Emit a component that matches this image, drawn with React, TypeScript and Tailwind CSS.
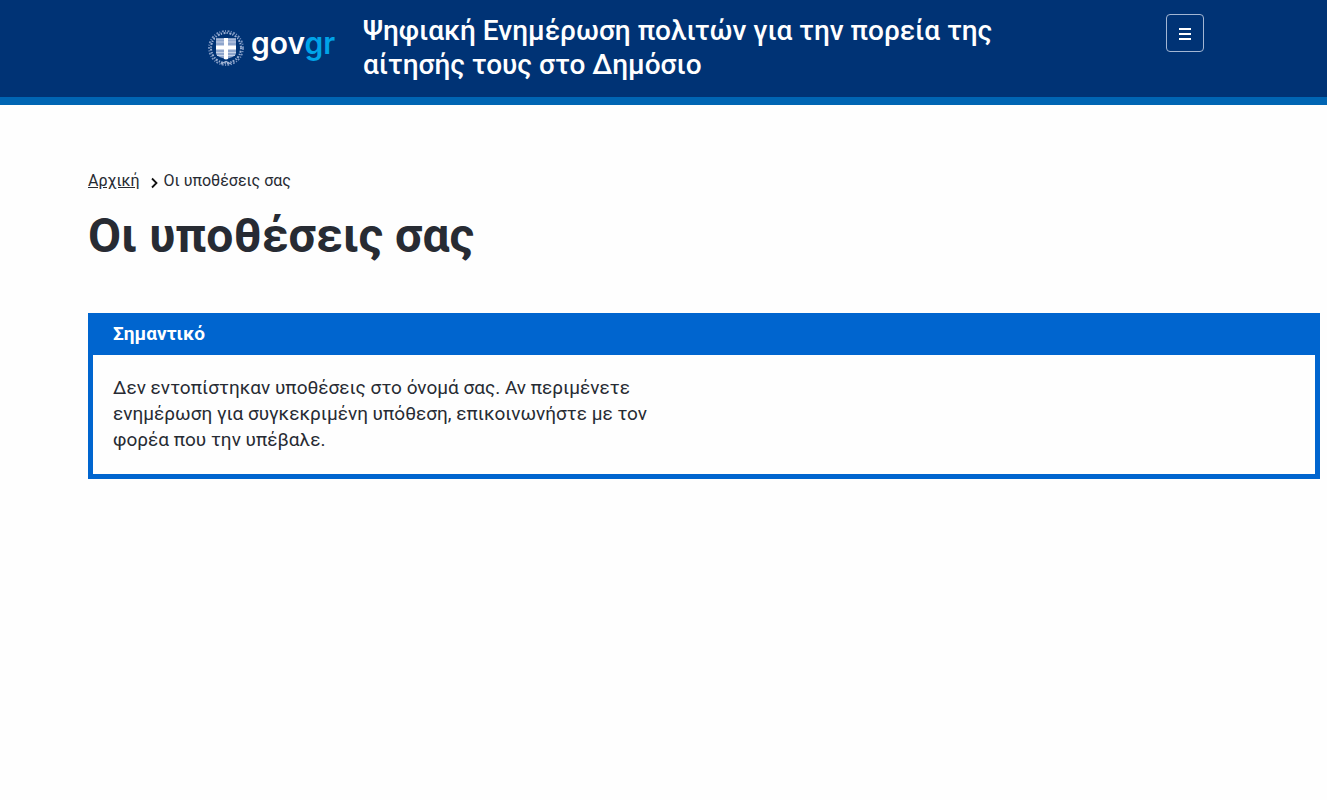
function Emblem() {
  return (
    <svg viewBox="0 0 38 38" className="size-[38px] shrink-0" aria-hidden="true">
      <circle cx="19" cy="19" r="17" fill="none" stroke="#7d97c2" strokeWidth="1.8" strokeDasharray="1.9 1.3 1 1.6" />
      <circle cx="19" cy="19" r="15" fill="none" stroke="#9aafd2" strokeWidth="2" strokeDasharray="1.3 1.5 2 1.1" />
      <path d="M14 35l5-2.500 5 2.500" fill="none" stroke="#a9bad8" strokeWidth="1.2" />
      <path d="M8 8.500h22V25c0 3-4 4.500-11 6-7-1.500-11-3-11-6z" fill="#003375" />
      <path d="M9 9.500h20V24c0 3-4 4.500-10 6-6-1.500-10-3-10-6z" fill="#8ea5cc" />
      <path d="M9 10h20M9 13h20M9 23.500h20M10 26.500h18" stroke="#c3d0e5" strokeWidth="1.2" />
      <path d="M17 9h4v7.500h8v4h-8V30l-2 .5-2-.5v-9.500H9v-4h8z" fill="#fff" />
    </svg>
  );
}

function Header() {
  return (
    <header className="border-b-8 border-[#0065b3] bg-[#003375] text-white">
      <div className="flex items-start pt-3.5 pr-[123px] pb-[15px] pl-[207px]">
        <a href="/" aria-label="govgr" className="mt-[13px] flex w-32 shrink-0 items-center gap-1.5">
          <Emblem />
          <span className="pb-2.5 font-['Inter',sans-serif] text-[30px] leading-8 font-semibold">
            gov<span className="text-[#00a4e8]">gr</span>
          </span>
        </a>
        <p className="ml-7 max-w-[640px] text-[28px] leading-[34px] font-medium">
          Ψηφιακή Ενημέρωση πολιτών για την πορεία της αίτησής τους στο Δημόσιο
        </p>
        <button
          type="button"
          aria-label="Μενού"
          className="ml-auto flex size-[38px] shrink-0 items-center justify-center rounded-[4px] border border-[#a3b6d3]"
        >
          <svg viewBox="0 0 12 12" className="mt-0.5 size-3" fill="#fff" aria-hidden="true">
            <path d="M0 0h12v2H0zM0 5h12v2H0zM0 10h12v2H0z" />
          </svg>
        </button>
      </div>
    </header>
  );
}

export default function App() {
  return (
    <div className="min-h-screen bg-[#fefefe] font-['Roboto',sans-serif] text-[#272b33]">
      <Header />
      <main className="pt-16 pr-[7px] pl-[88px]">
        <nav aria-label="Διαδρομή πλοήγησης">
          <ol className="flex items-center text-base leading-6">
            <li>
              <a href="/" className="underline">
                Αρχική
              </a>
            </li>
            <li className="flex items-center">
              <svg viewBox="0 0 8 12" className="mt-1 mr-[5px] ml-[11px] h-3 w-2" aria-hidden="true">
                <path d="M1 1.500l4.500 4.500L1 10.500" fill="none" stroke="#111" strokeWidth="1.8" />
              </svg>
              <span>Οι υποθέσεις σας</span>
            </li>
          </ol>
        </nav>
        <h1 className="mt-[15px] text-5xl leading-[56px] font-bold">Οι υποθέσεις σας</h1>
        <section className="mt-[49px] border-[5px] border-[#0065cf]" aria-labelledby="notice-title">
          <h2 id="notice-title" className="bg-[#0065cf] px-5 pt-[3px] pb-[9px] text-[19px] leading-[25px] font-bold text-white">
            Σημαντικό
          </h2>
          <div className="px-5 pt-5 pb-[21px]">
            <p className="max-w-[560px] text-[19px] leading-[26px]">
              Δεν εντοπίστηκαν υποθέσεις στο όνομά σας. Αν περιμένετε ενημέρωση για συγκεκριμένη υπόθεση, επικοινωνήστε με τον
              φορέα που την υπέβαλε.
            </p>
          </div>
        </section>
      </main>
    </div>
  );
}
